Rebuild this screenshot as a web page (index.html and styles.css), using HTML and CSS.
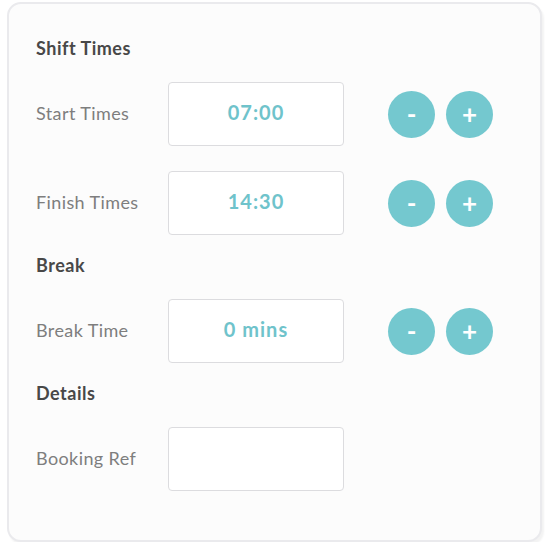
FILE: index.html
```html
<!DOCTYPE html>
<html>
<head>
    <title>Shift details</title>
    <link rel="stylesheet" href="styles.css">
</head>
<body>
    <div class="card">
        <div class="section">
            <p class="heading">Shift Times</p>
            <div class="row">
                <span class="label">Start Times</span>
                <div class="field">07:00</div>
                <div class="steppers">
                    <button class="step">-</button>
                    <button class="step">+</button>
                </div>
            </div>
            <div class="row">
                <span class="label">Finish Times</span>
                <div class="field">14:30</div>
                <div class="steppers">
                    <button class="step">-</button>
                    <button class="step">+</button>
                </div>
            </div>
        </div>

        <div class="section">
            <p class="heading">Break</p>
            <div class="row">
                <span class="label">Break Time</span>
                <div class="field">0 mins</div>
                <div class="steppers">
                    <button class="step">-</button>
                    <button class="step">+</button>
                </div>
            </div>
        </div>

        <div class="section">
            <p class="heading">Details</p>
            <div class="row">
                <span class="label">Booking Ref</span>
                <div class="field"></div>
            </div>
        </div>
    </div>
</body>
</html>
```

FILE: styles.css
```css
body {
    margin: 0;
    background-color: #fff;
    font-family: Lato, "Open Sans", sans-serif;
}
.card {
    box-sizing: border-box;
    margin: 2px 8px 0 7px;
    height: 540px;
    padding: 34px 0 0 27px;
    background-color: #fcfcfc;
    border: 2px solid #eaeaed;
    border-radius: 14px;
    box-shadow: 2px 3px 2px rgba(0, 0, 0, 0.05);
    display: flex;
    flex-direction: column;
    gap: 20px;
}
.section {
    display: flex;
    flex-direction: column;
    gap: 25px;
}
.heading {
    margin: 0 0 -1px 0;
    font-size: 18px;
    line-height: 20px;
    font-weight: bold;
    letter-spacing: 0.5px;
    color: #484848;
}
.row {
    display: flex;
    align-items: center;
}
.label {
    width: 132px;
    padding-bottom: 3px;
    font-size: 18px;
    letter-spacing: 0.4px;
    color: #7e7e7e;
}
.field {
    box-sizing: border-box;
    width: 176px;
    height: 64px;
    border: 1.5px solid #dcdcdf;
    border-radius: 4px;
    background-color: #fff;
    display: flex;
    align-items: center;
    justify-content: center;
    padding-bottom: 4px;
    font-size: 20px;
    font-weight: bold;
    letter-spacing: 1px;
    color: #6fc3cb;
}
.steppers {
    display: flex;
    gap: 11px;
    margin-left: 44px;
}
.step {
    width: 47px;
    height: 47px;
    padding: 0;
    border: none;
    border-radius: 50%;
    background-color: #74c8cf;
    color: #fff;
    font-family: Lato, sans-serif;
    font-size: 26px;
    font-weight: bold;
    line-height: 47px;
}
```
